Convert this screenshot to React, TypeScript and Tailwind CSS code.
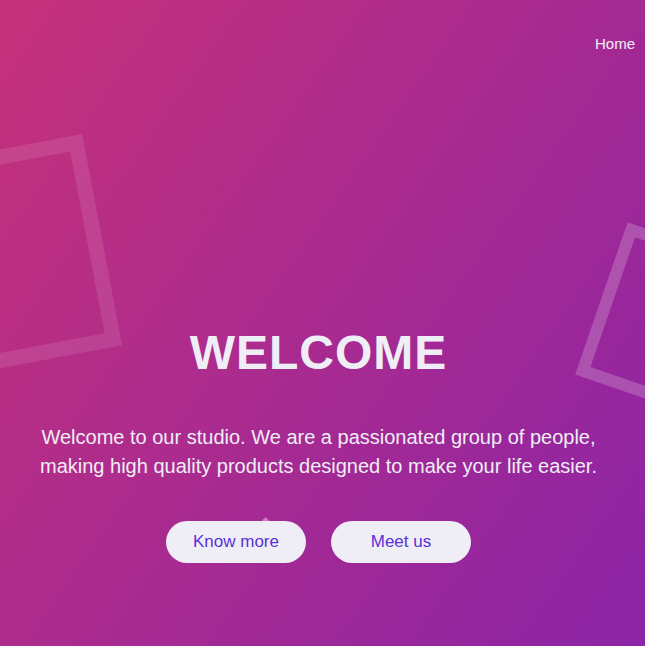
import React from "react";

export default function App() {
  return (
    <div
      className="relative h-[646px] w-full overflow-hidden bg-[linear-gradient(125deg,#c6317a_0%,#8b24a6_100%)] text-[#efedf5]"
      style={{ fontFamily: '"Liberation Sans", Arial, sans-serif' }}
    >
      {/* decorative squares */}
      <div className="pointer-events-none absolute left-[-111px] top-[152px] h-[215px] w-[215px] rotate-[-10.7deg] border-[15px] border-white/10" />
      <div className="pointer-events-none absolute left-[597px] top-[244px] h-[161px] w-[161px] rotate-[19deg] border-[12px] border-white/20" />
      <div className="pointer-events-none absolute left-[263px] top-[518px] h-[5px] w-[5px] rotate-45 bg-white/40" />

      <nav className="relative flex justify-end pr-[10px] pt-[34px]">
        <a className="text-[15px] leading-[20px] text-[#f4eef6]" href="#">
          Home
        </a>
      </nav>

      <main className="relative flex flex-col items-center pr-[8px] pt-[275px]">
        <h1 className="text-[48px] font-bold leading-[48px] tracking-[1px]">WELCOME</h1>
        <p className="mt-[46px] max-w-[600px] text-center text-[20px] leading-[29px]">
          Welcome to our studio. We are a passionated group of people, making high quality products designed to make
          your life easier.
        </p>
        <div className="mt-[40px] flex gap-[25px]">
          <button className="h-[42px] w-[140px] rounded-full bg-[#efedf5] text-[17px] text-[#5a31d8]">
            Know more
          </button>
          <button className="h-[42px] w-[140px] rounded-full bg-[#efedf5] text-[17px] text-[#5a31d8]">
            Meet us
          </button>
        </div>
      </main>
    </div>
  );
}
